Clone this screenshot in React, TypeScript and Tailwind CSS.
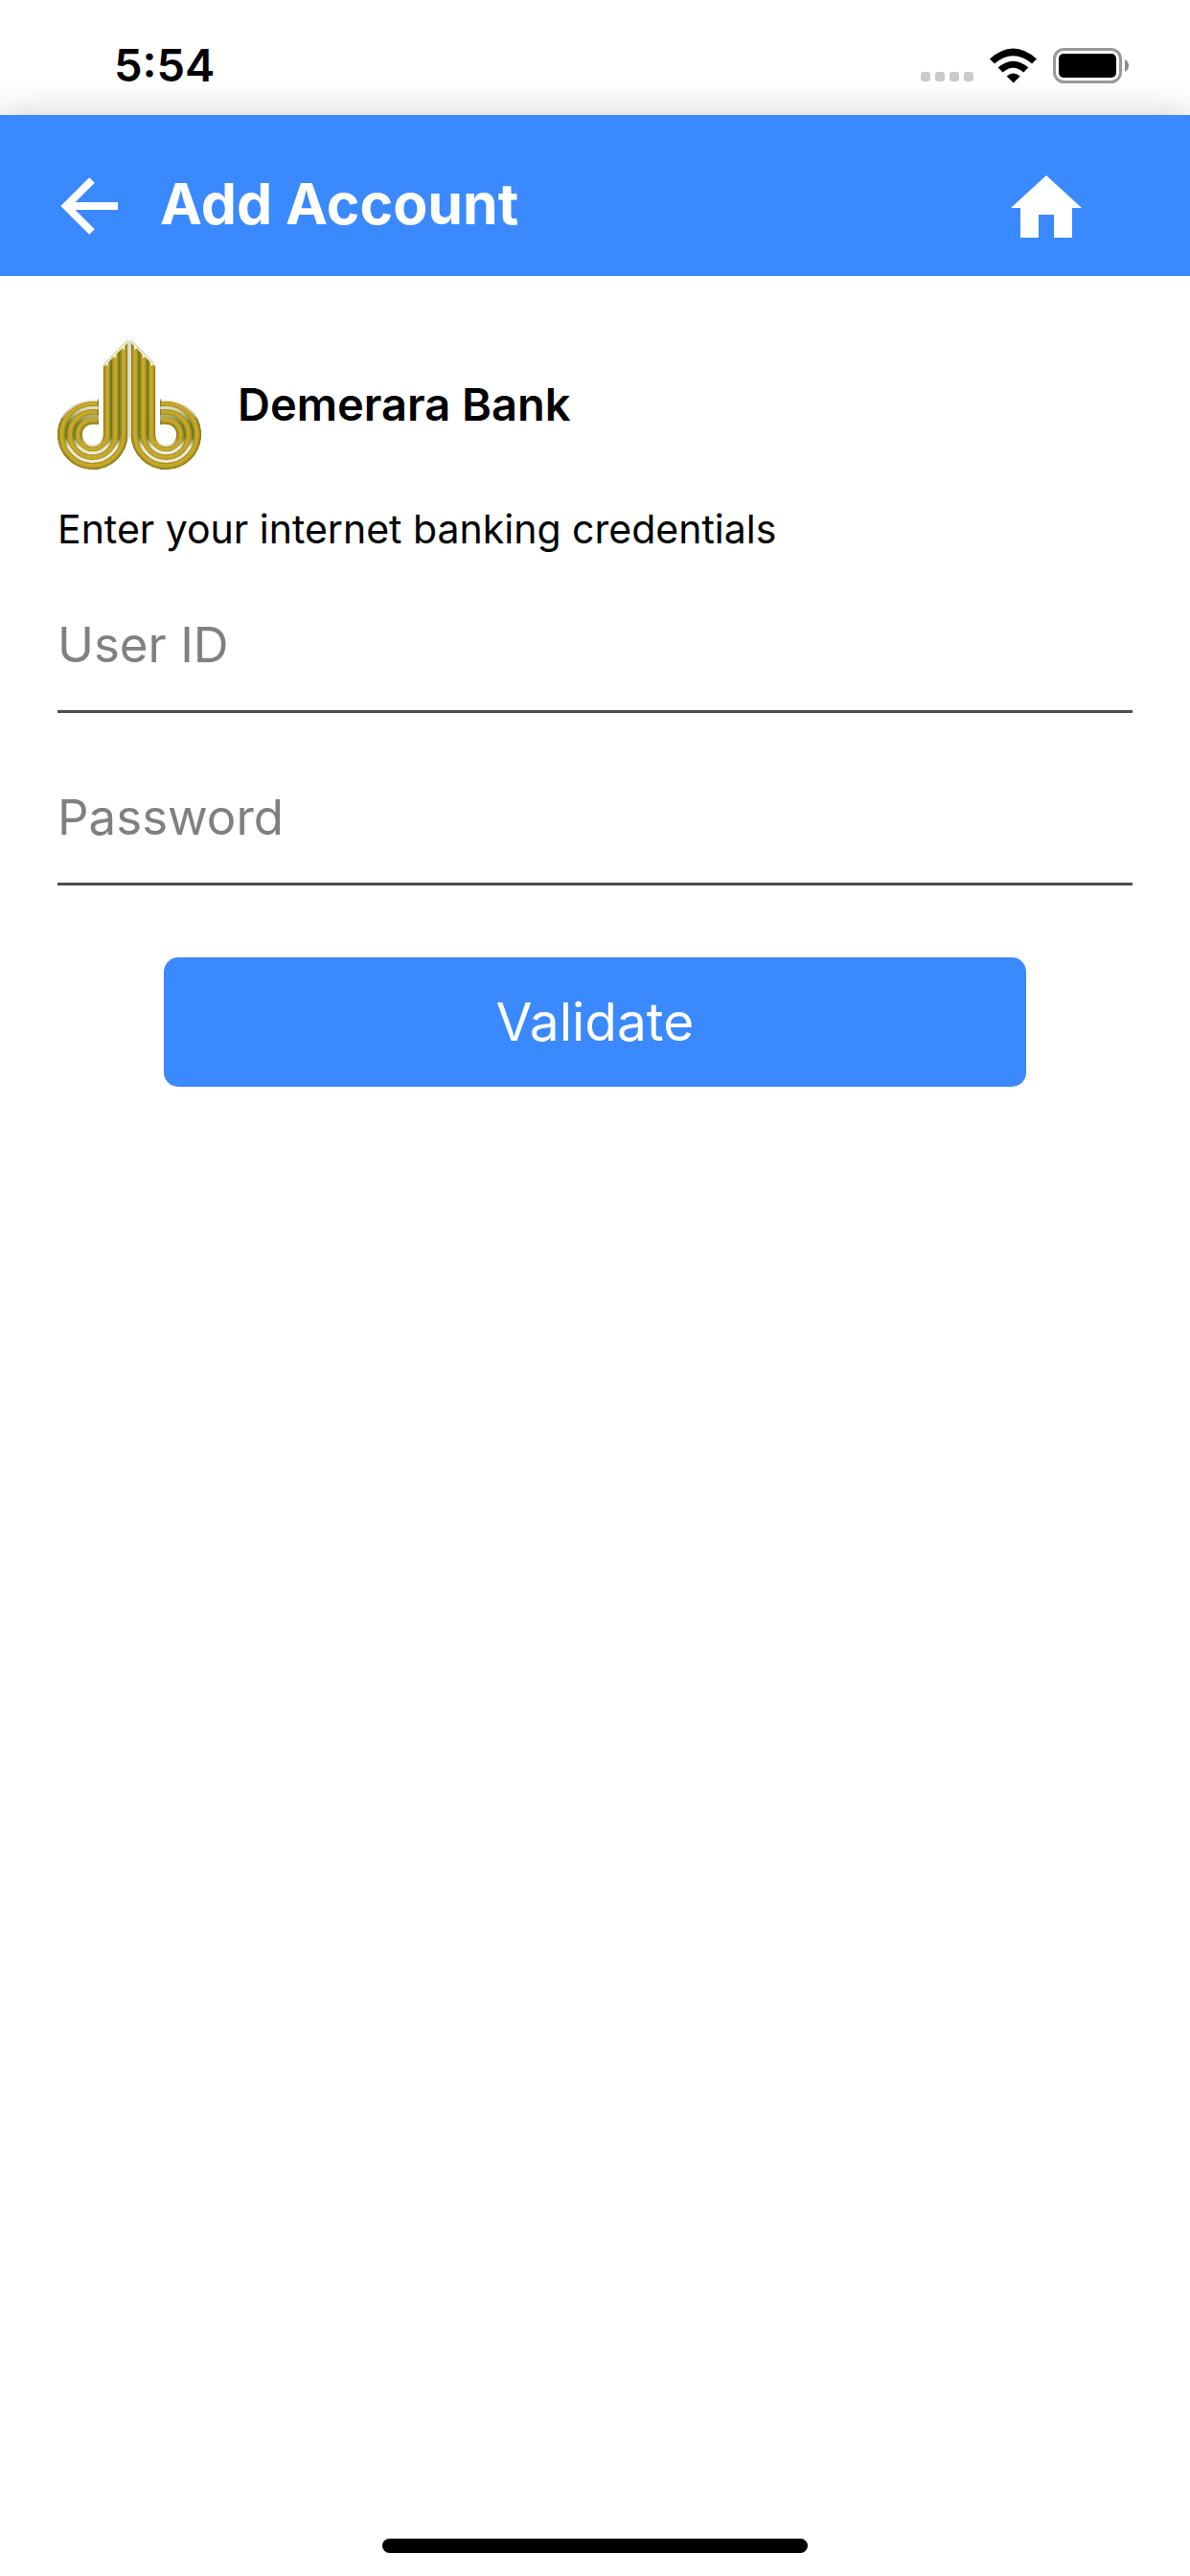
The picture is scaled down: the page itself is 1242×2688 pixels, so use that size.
import { useState } from 'react';

interface FieldProps {
  id: string;
  label: string;
  type: 'text' | 'password';
  value: string;
  onChange: (value: string) => void;
}

function Field({ id, label, type, value, onChange }: FieldProps) {
  return (
    <input
      id={id}
      type={type}
      value={value}
      aria-label={label}
      placeholder={label}
      onChange={(e) => onChange(e.target.value)}
      className="h-[141px] w-full border-b-3 border-[#4d4d4d] bg-transparent text-[51px] text-black outline-none placeholder:text-[#808080]"
    />
  );
}

function StatusBar() {
  return (
    <div className="flex h-[120px] items-center justify-between pt-4 pr-[63px] pl-[119px]">
      <span className="text-[47px] font-semibold">5:54</span>
      <div className="flex items-center">
        <div className="mt-6 mr-[17px] flex gap-[5px]">
          <span className="size-[10px] rounded-[3px] bg-[#cacaca]" />
          <span className="size-[10px] rounded-[3px] bg-[#cacaca]" />
          <span className="size-[10px] rounded-[3px] bg-[#cacaca]" />
          <span className="size-[10px] rounded-[3px] bg-[#cacaca]" />
        </div>
        <svg viewBox="276 56 147 110" className="mr-[17px] h-[37px] w-[49px]" aria-hidden="true">
          <path d="M276 90Q349 24 423 90L408 105Q349 56 291 105Z" />
          <path d="M302 117Q349 76 397 117L382 132Q349 104 317 132Z" />
          <path d="M329 144Q349 126 371 144L350 165Z" />
        </svg>
        <svg viewBox="0 0 80 37" className="h-[37px] w-20" aria-hidden="true">
          <rect x="1.5" y="1.5" width="69" height="34" rx="10" fill="none" stroke="#999" strokeWidth="3" />
          <rect x="6" y="6" width="60" height="25" rx="5" />
          <path d="M75 12Q79 14 79 18.500T75 25Z" fill="#8c8c8c" />
        </svg>
      </div>
    </div>
  );
}

// One half of the mark, the other half is mirrored
function LogoHalf() {
  return (
    <g clipPath="url(#halfClip)" fill="none">
      {[97, 71, 46].map((r) => {
        const d = `M${170 + r} 60V368A${r} ${r} 0 1 1 170 ${368 - r}H188`;
        return (
          <g key={r}>
            <path d={d} stroke="#84791c" strokeWidth="27" />
            <path d={d} stroke="#a8901f" strokeWidth="20" />
            <path d={d} stroke="#c8a82a" strokeWidth="10" />
          </g>
        );
      })}
      {[84, 58].map((r) => (
        <path
          key={r}
          d={`M${170 + r} 60V368A${r} ${r} 0 1 1 170 ${368 - r}H188`}
          stroke="#5a7f2c"
          strokeWidth="4"
        />
      ))}
      {[84, 58, 34].map((r) => (
        <path
          key={r}
          d={`M${170 + r} 368A${r} ${r} 0 1 1 170 ${368 - r}H188`}
          stroke="url(#shine)"
          strokeWidth="9"
        />
      ))}
      <path d="M75 315A109 109 0 0 1 170 259H188" stroke="url(#shine)" strokeWidth="9" />
      <path d="M188 256v24M188 290v18M188 322v16" stroke="#726a20" strokeWidth="5" />
      <path d="M203 151L281 73" stroke="#f3eed2" strokeWidth="9" />
      <path d="M216 142v10M241 117v10M267 91v10" stroke="#f6f1d8" strokeWidth="6" />
    </g>
  );
}

function BankLogo() {
  return (
    <svg viewBox="60 70 450 410" className="h-[137px] w-[150px]" role="img" aria-label="Demerara Bank logo">
      <defs>
        <clipPath id="halfClip">
          <path d="M281 70V368A111 111 0 1 1 170 256H188V338H170A32 32 0 1 0 203 370V150Z" />
        </clipPath>
        <linearGradient id="shine" gradientUnits="userSpaceOnUse" x1="0" y1="256" x2="0" y2="478">
          <stop offset="0" stopColor="#fff" stopOpacity="0.95" />
          <stop offset="0.15" stopColor="#fff" stopOpacity="0.7" />
          <stop offset="0.35" stopColor="#fff" stopOpacity="0" />
          <stop offset="0.55" stopColor="#fff" stopOpacity="0" />
          <stop offset="0.68" stopColor="#fff" stopOpacity="0.85" />
          <stop offset="1" stopColor="#fff" stopOpacity="0.85" />
        </linearGradient>
      </defs>
      <path d="M285 74V380" stroke="#dcdcd4" strokeWidth="8" />
      <LogoHalf />
      <g transform="translate(570 0) scale(-1 1)">
        <LogoHalf />
      </g>
    </svg>
  );
}

export default function App() {
  const [userId, setUserId] = useState('');
  const [password, setPassword] = useState('');

  return (
    <div className="flex min-h-screen flex-col bg-white font-['Inter','Liberation_Sans',sans-serif] text-black">
      <StatusBar />

      <header className="flex h-[168px] items-center bg-[#3a89ff] pt-[22px] pr-[113px] pl-[63px] text-white shadow-[0_0_36px_rgba(0,0,0,0.2)]">
        <button type="button" aria-label="Back" className="mr-11">
          <svg viewBox="0 0 60 60" className="size-[60px]" fill="none" stroke="currentColor" strokeWidth="8">
            <path d="M60 30H8M33 3L6 30L33 57" />
          </svg>
        </button>
        <h1 className="flex-1 pb-1 text-[59px] leading-[72px] font-bold">Add Account</h1>
        <a href="#home" aria-label="Home">
          <svg viewBox="0 0 74 65" className="h-[65px] w-[74px]" fill="currentColor">
            <path d="M37 0L74 34H64V65H45V41H29V65H10V34H0Z" />
          </svg>
        </a>
      </header>

      <main className="relative flex-1 bg-white px-[60px] pt-[66px]">
        <div className="flex items-center gap-[38px]">
          <BankLogo />
          <h2 className="text-[47px] font-semibold">Demerara Bank</h2>
        </div>
        <p className="mt-[34px] text-[41px] leading-[54px]">Enter your internet banking credentials</p>

        <form className="flex flex-col pt-6" onSubmit={(e) => e.preventDefault()}>
          <div className="flex flex-col gap-[39px]">
            <Field id="userId" label="User ID" type="text" value={userId} onChange={setUserId} />
            <Field id="password" label="Password" type="password" value={password} onChange={setPassword} />
          </div>
          <button
            type="submit"
            className="mx-[111px] mt-[75px] h-[135px] rounded-[15px] bg-[#3a89ff] text-[55px] text-white"
          >
            Validate
          </button>
        </form>
      </main>

      <footer className="relative flex justify-center bg-white pb-6">
        <div className="h-[15px] w-[444px] rounded-full bg-black" />
      </footer>
    </div>
  );
}
